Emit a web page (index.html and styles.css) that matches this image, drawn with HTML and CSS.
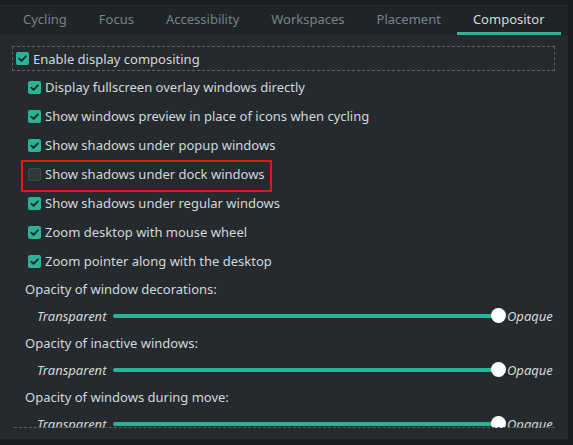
FILE: index.html
```html
<!DOCTYPE html>
<html>
<head>
<meta charset="utf-8">
<link rel="stylesheet" href="styles.css">
</head>
<body>
<div class="window">
  <div class="tabbar">
    <div class="tab">Cycling</div>
    <div class="tab">Focus</div>
    <div class="tab">Accessibility</div>
    <div class="tab">Workspaces</div>
    <div class="tab">Placement</div>
    <div class="tab active">Compositor</div>
  </div>
  <div class="panel">
    <div class="scroll">
      <div class="group">
        <div class="cb"><span class="box on"><svg viewBox="0 0 14 14" width="13" height="13"><path d="M3.5 7.2 L6 9.6 L10.6 4.6" fill="none" stroke="#1f2528" stroke-width="2" stroke-linecap="round" stroke-linejoin="round"/></svg></span>Enable display compositing</div>
      </div>
      <div class="options">
        <div class="cb row"><span class="box on"><svg viewBox="0 0 14 14" width="13" height="13"><path d="M3.5 7.2 L6 9.6 L10.6 4.6" fill="none" stroke="#1f2528" stroke-width="2" stroke-linecap="round" stroke-linejoin="round"/></svg></span>Display fullscreen overlay windows directly</div>
        <div class="cb row"><span class="box on"><svg viewBox="0 0 14 14" width="13" height="13"><path d="M3.5 7.2 L6 9.6 L10.6 4.6" fill="none" stroke="#1f2528" stroke-width="2" stroke-linecap="round" stroke-linejoin="round"/></svg></span>Show windows preview in place of icons when cycling</div>
        <div class="cb row"><span class="box on"><svg viewBox="0 0 14 14" width="13" height="13"><path d="M3.5 7.2 L6 9.6 L10.6 4.6" fill="none" stroke="#1f2528" stroke-width="2" stroke-linecap="round" stroke-linejoin="round"/></svg></span>Show shadows under popup windows</div>
        <div class="cb row marked"><span class="box off"></span>Show shadows under dock windows</div>
        <div class="cb row"><span class="box on"><svg viewBox="0 0 14 14" width="13" height="13"><path d="M3.5 7.2 L6 9.6 L10.6 4.6" fill="none" stroke="#1f2528" stroke-width="2" stroke-linecap="round" stroke-linejoin="round"/></svg></span>Show shadows under regular windows</div>
        <div class="cb row"><span class="box on"><svg viewBox="0 0 14 14" width="13" height="13"><path d="M3.5 7.2 L6 9.6 L10.6 4.6" fill="none" stroke="#1f2528" stroke-width="2" stroke-linecap="round" stroke-linejoin="round"/></svg></span>Zoom desktop with mouse wheel</div>
        <div class="cb row"><span class="box on"><svg viewBox="0 0 14 14" width="13" height="13"><path d="M3.5 7.2 L6 9.6 L10.6 4.6" fill="none" stroke="#1f2528" stroke-width="2" stroke-linecap="round" stroke-linejoin="round"/></svg></span>Zoom pointer along with the desktop</div>
      </div>
      <div class="label">Opacity of window decorations:</div>
      <div class="slider-row">
        <span class="end left">Transparent</span>
        <div class="track"><span class="handle"></span></div>
        <span class="end right">Opaque</span>
      </div>
      <div class="label">Opacity of inactive windows:</div>
      <div class="slider-row">
        <span class="end left">Transparent</span>
        <div class="track"><span class="handle"></span></div>
        <span class="end right">Opaque</span>
      </div>
      <div class="label">Opacity of windows during move:</div>
      <div class="slider-row focus">
        <span class="end left">Transparent</span>
        <div class="track"><span class="handle"></span></div>
        <span class="end right">Opaque</span>
      </div>
    </div>
  </div>
</div>
</body>
</html>
```
FILE: styles.css
```css
* { box-sizing: border-box; }
html, body {
  margin: 0;
  padding: 0;
  background: #1a1e21;
  font-family: "Noto Sans", "Open Sans", sans-serif;
  font-size: 13px;
  color: #d4d8db;
}
.window {
  width: 568px;
  height: 439px;
  display: flex;
  flex-direction: column;
}
.tabbar {
  margin-top: 5px;
  height: 30px;
  background: #1f2427;
  display: flex;
  padding-left: 7px;
  border-top: 1px solid #22282b;
}
.tab {
  padding: 0 16px;
  line-height: 26px;
  color: #788287;
  border-bottom: 3px solid transparent;
  white-space: nowrap;
}
.tab.active {
  color: #d4d9dc;
  border-bottom-color: #2bb397;
}
.panel {
  flex: 1;
  background: #242a2d;
  padding: 11px 13px 11px 12px;
  display: flex;
  flex-direction: column;
  min-height: 0;
}
.scroll {
  flex: 1;
  overflow: hidden;
  display: flex;
  flex-direction: column;
  min-height: 0;
}
.group {
  border: 1px dashed #5b6367;
  height: 25px;
  padding-left: 3px;
  display: flex;
  align-items: center;
  flex-shrink: 0;
}
.cb {
  display: flex;
  align-items: center;
  white-space: nowrap;
}
.box {
  width: 13px;
  height: 13px;
  border-radius: 2px;
  margin-right: 4px;
  flex-shrink: 0;
  display: flex;
}
.box.on { background: #2bb397; }
.box.off {
  background: #30373a;
  border: 1px solid #41484b;
}
.options {
  margin-top: 1.5px;
  padding-left: 16px;
  display: flex;
  flex-direction: column;
  align-items: flex-start;
  flex-shrink: 0;
}
.row {
  height: 29px;
  position: relative;
}
.marked::after {
  content: "";
  position: absolute;
  left: -7px;
  right: -7px;
  top: 0;
  bottom: -3px;
  border: 2px solid #e8161a;
}
.label {
  height: 27px;
  padding-left: 13px;
  display: flex;
  align-items: center;
  flex-shrink: 0;
}
.slider-row {
  height: 27px;
  display: flex;
  align-items: center;
  padding-left: 25px;
  flex-shrink: 0;
  position: relative;
}
.end {
  font-style: italic;
  color: #d4d8db;
}
.end.left { width: 76px; }
.track {
  position: relative;
  width: 385px;
  height: 4px;
  background: #2bb397;
  border-radius: 2px;
}
.handle {
  position: absolute;
  right: -8px;
  top: -6px;
  width: 15px;
  height: 15px;
  border-radius: 50%;
  background: #ffffff;
}
.end.right { margin-left: 9px; }
.focus::after {
  content: "";
  position: absolute;
  left: 2px;
  right: 0;
  top: 16px;
  border-top: 1px dashed #5b6367;
}
```
